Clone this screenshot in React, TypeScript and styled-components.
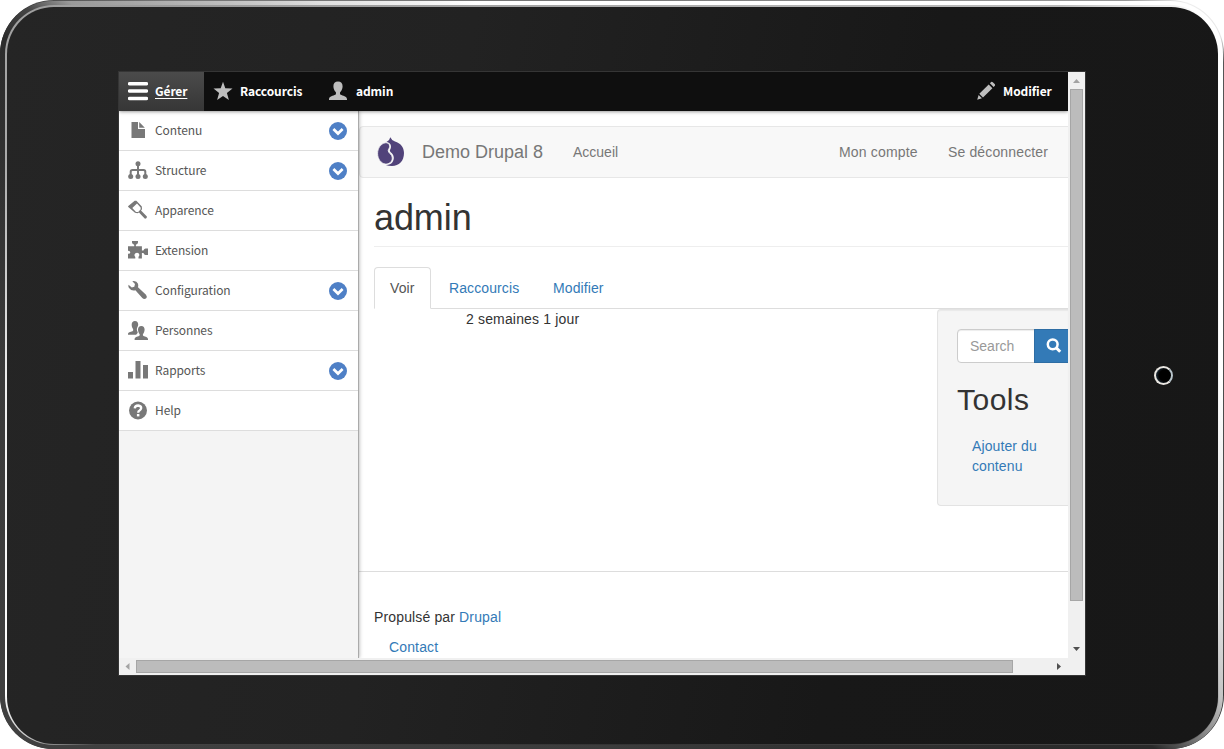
import React from "react";
import styled, { createGlobalStyle, css } from "styled-components";

const Global = createGlobalStyle`
  * { box-sizing: border-box; }
  body { margin: 0; background: #fff; overflow: hidden; }
  a { text-decoration: none; }
`;

/* Tablet */
const Rim = styled.div`
  width: 1224px;
  height: 749px;
  padding: 1px 1px 0 0;
  border-radius: 54px;
  background: conic-gradient(
    from 0deg at 612px 374px,
    #777 0deg, #999 54deg, #eee 57deg, #e4e4e4 61deg, #555 63deg, #444 115deg,
    #222 122deg, #222 238deg, #2a2a2a 242deg, #2e2e2e 290deg, #222 301deg, #555 304deg, #777 310deg
  );
`;
const Metal = styled.div`
  width: 1223px;
  height: 748px;
  padding: 4px 4px 4px 5px;
  border-radius: 53px;
  background: conic-gradient(
    from 0deg at 612px 374px,
    #fff 0deg, #fff 90deg, #dcdcdc 112deg, #c4c4c4 118deg, #777 122deg, #2a2a2a 124.5deg,
    #3c3c3c 180deg, #404040 238deg, #3a3a3a 270deg, #2c2c2c 299deg, #444 302deg, #999 304.5deg, #e0e0e0 322deg, #fff 340deg
  );
`;
const Edge = styled.div`
  width: 1214px;
  height: 740px;
  padding: 2px 1px 1px 2px;
  border-radius: 49px;
  background: conic-gradient(
    from 0deg at 612px 374px,
    #aaa 0deg, #bbb 50deg, #fff 58deg, #eee 110deg, #aaa 119deg, #444 123deg,
    #333 180deg, #444 235deg, #ccc 239deg, #fff 243deg, #eee 270deg, #aaa 290deg, #999 310deg, #aaa 360deg
  );
`;
const Face = styled.div`
  display: flex;
  align-items: center;
  height: 737px;
  width: 1211px;
  border-radius: 47px;
  padding: 0 45px 0 111px;
  justify-content: space-between;
  background: linear-gradient(100deg, #252525 0%, #222 35%, #181818 70%, #171717 100%);
`;
const HomeButton = styled.div`
  width: 19px;
  height: 19px;
  border-radius: 50%;
  border: 2px solid #e9e6e1;
  border-right-color: #b9c6cc;
  background: radial-gradient(circle at 60% 50%, #000 50%, #2b4354 90%);
`;
const Screen = styled.div`
  display: grid;
  grid-template-columns: 949px 17px;
  grid-template-rows: 586px 17px;
  border: 1px solid #353535;
  margin-top: -5px;
  background: #f0f0f0;
`;
const Page = styled.div`
  display: flex;
  flex-direction: column;
  overflow: hidden;
  background: #fff;
  font: 14px/20px "Liberation Sans", Arial, sans-serif;
  color: #333;
`;

/* Scrollbars */
const VTrack = styled.div`
  display: flex;
  flex-direction: column;
  align-items: center;
`;
const HTrack = styled.div`
  display: flex;
  align-items: center;
`;
const Arrow = styled.svg`
  display: block;
  width: 17px;
  height: 17px;
`;
const VThumb = styled.div`
  width: 13px;
  height: 512px;
  background: #bcbcbc;
  border: 1px solid #a6a6a6;
`;
const HThumb = styled.div`
  width: 877px;
  height: 13px;
  background: #bcbcbc;
  border: 1px solid #a6a6a6;
`;
const Spacer = styled.div`
  flex: 1;
`;

/* Admin toolbar */
const Toolbar = styled.div`
  display: flex;
  flex: none;
  height: 39px;
  background: #0f0f0f;
  box-shadow: 0 0 4px rgba(0, 0, 0, 0.6);
  position: relative;
  z-index: 2;
`;
const Tab = styled.a<{ $active?: boolean; $width: number; $gap?: number }>`
  display: flex;
  align-items: center;
  width: ${(p) => p.$width}px;
  padding-left: 9px;
  gap: ${(p) => p.$gap ?? 7}px;
  color: #fff;
  font: 700 12px/20px "Noto Sans CJK SC", sans-serif;
  letter-spacing: -0.1px;
  ${(p) =>
    p.$active &&
    css`
      background: linear-gradient(#4b4b4b, #363636);
      span { text-decoration: underline; text-underline-offset: 2px; }
    `}
  svg { flex: none; }
`;
const Body = styled.div`
  display: flex;
  flex: 1;
  min-height: 0;
`;
const Tray = styled.nav`
  flex: none;
  width: 240px;
  background: #f4f4f4;
  border-right: 1px solid #aaa;
  box-shadow: 0 0 4px rgba(0, 0, 0, 0.35);
  position: relative;
  z-index: 1;
`;
const MenuRow = styled.a`
  display: flex;
  align-items: center;
  height: 40px;
  padding: 0 11px 0 9px;
  gap: 7px;
  background: #fff;
  border-bottom: 1px solid #ddd;
  color: #565656;
  font: 400 12px/20px "Noto Sans CJK SC", sans-serif;
  letter-spacing: -0.1px;
  svg { flex: none; }
  span { flex: 1; }
`;
const ChevronIcon = styled.svg`
  margin-top: 2px;
`;

/* Site content */
const Content = styled.main`
  flex: 1;
  min-width: 0;
  overflow: hidden;
  padding-top: 15px;
`;
const NavBar = styled.div`
  display: flex;
  align-items: center;
  height: 52px;
  width: 740px;
  padding-left: 17px;
  border: 1px solid #e7e7e7;
  border-radius: 4px;
  background: #f8f8f8;
  color: #777;
`;
const Brand = styled.span`
  width: 151px;
  margin-left: 17px;
  font-size: 18px;
  line-height: 20px;
`;
const NavLink = styled.a<{ $width: number; $spacing?: number }>`
  width: ${(p) => p.$width}px;
  letter-spacing: ${(p) => p.$spacing ?? 0}px;
  white-space: nowrap;
`;
const Inner = styled.div`
  padding-left: 15px;
`;
const Title = styled.h1`
  margin: 20px 0 20px;
  height: 49px;
  border-bottom: 1px solid #eee;
  font-size: 36px;
  font-weight: 400;
  line-height: 40px;
  letter-spacing: -0.1px;
`;
const Tabs = styled.div`
  display: flex;
  height: 42px;
  border-bottom: 1px solid #ddd;
`;
const PageTab = styled.a<{ $active?: boolean; $width: number }>`
  width: ${(p) => p.$width}px;
  height: 42px;
  padding: 10px 15px;
  border: 1px solid transparent;
  border-radius: 4px 4px 0 0;
  color: #337ab7;
  margin-right: 2px;
  letter-spacing: 0.1px;
  ${(p) =>
    p.$active &&
    css`
      color: #555;
      background: #fff;
      border-color: #ddd;
      border-bottom-color: #fff;
    `}
`;
const Columns = styled.div`
  display: flex;
  justify-content: space-between;
  height: 262px;
`;
const Since = styled.div`
  padding-left: 92px;
  letter-spacing: 0.16px;
`;
const Well = styled.aside`
  flex: none;
  width: 131px;
  height: 197px;
  padding: 19px 0 0 19px;
  background: #f5f5f5;
  border: 1px solid #e3e3e3;
  border-right: 0;
  border-radius: 4px 0 0 4px;
  box-shadow: inset 0 1px 1px rgba(0, 0, 0, 0.05);
`;
const Search = styled.div`
  display: flex;
  height: 34px;
`;
const Field = styled.div`
  width: 78px;
  padding: 6px 12px;
  border: 1px solid #ccc;
  border-radius: 4px 0 0 4px;
  background: #fff;
  color: #999;
  box-shadow: inset 0 1px 1px rgba(0, 0, 0, 0.075);
`;
const SearchButton = styled.div`
  flex: 1;
  margin-left: -1px;
  padding: 8px 0 0 11px;
  background: #337ab7;
  border: 1px solid #2e6da4;
  border-right: 0;
`;
const WellTitle = styled.h2`
  margin: 20px 0 10px;
  font-size: 30px;
  font-weight: 400;
  line-height: 33px;
  letter-spacing: 0.5px;
`;
const WellLink = styled.a`
  display: block;
  width: 90px;
  padding: 10px 0 0 15px;
  color: #337ab7;
  letter-spacing: 0.1px;
`;
const Footer = styled.footer`
  border-top: 1px solid #ddd;
  padding: 35px 0 0 15px;
  letter-spacing: 0.14px;
  a { color: #337ab7; }
  div + div { padding: 10px 0 0 15px; }
`;

const Icon = ({ children, color = "#787878" }: { children: React.ReactNode; color?: string }) => (
  <svg width="20" height="20" viewBox="0 0 20 20" fill={color}>
    {children}
  </svg>
);

const personPath =
  "M10 .5c3 0 4.600 2 4.600 4.800c0 2.400-1 4.500-2.300 5.700c-.5.600-.4 2.300.3 2.700c2 .9 6.400 1.600 6.400 4.300v1H1v-1c0-2.700 4.400-3.400 6.400-4.300c.7-.4.800-2.100.3-2.700C6.400 9.800 5.400 7.700 5.400 5.300C5.400 2.500 7 .5 10 .5z";

const menu: { label: string; more?: boolean; icon: React.ReactNode }[] = [
  { label: "Contenu", more: true, icon: <path d="M3.500 2H10v7h7v9H3.500zM11.200 2L16.800 7.700h-5.600z" /> },
  {
    label: "Structure",
    more: true,
    icon: (
      <>
        <circle cx="10" cy="3.800" r="2.500" />
        <path d="M10 5v10M2.700 16v-4.200q0-1.800 1.800-1.800h11q1.800 0 1.800 1.800V16" fill="none" stroke="#787878" strokeWidth="2" />
        <circle cx="2.700" cy="16.500" r="2.500" />
        <circle cx="10" cy="16.500" r="2.500" />
        <circle cx="17.300" cy="16.500" r="2.500" />
      </>
    ),
  },
  {
    label: "Apparence",
    icon: (
      <path
        fillRule="evenodd"
        d="M6.700.8L8.400.700L13.800 6.500L14 9.200L13 10.500L18.900 16.500Q19.300 18.900 16.700 18.600L11 12.600L9.500 13.300L7 12.800L0 6.800L.3 6zM4.300 8L8 12L10.200 11.900L12.700 9.300L12.600 7.500L9 3.600z"
      />
    ),
  },
  {
    label: "Extension",
    icon: (
      <path d="M0 6.300h6.200V4.700Q4 4 4 2.600V1h6v1.600Q10 4 7.900 4.700v1.600h6v4.200h1.500Q16.200 8.600 17.600 8.600H20v6.300h-2.400Q16.200 14.900 15.400 13h-1.500v5.500h-3.400v-1.700Q12 15.300 10.800 13.500Q9.300 12 7.400 13.200Q5.500 15 7.300 17v1.500H0v-4.700Q2.300 14 2.300 12.200Q2.200 10.600 0 10.700z" />
    ),
  },
  {
    label: "Configuration",
    more: true,
    icon: (
      <path d="M4.300 1.300Q8.500.4 10 3.800Q10.500 5.600 10 7.300L18 14.800Q19.700 17 18 18.600Q16 19.800 14.300 18L7.400 10.300Q3 11.200.8 7.800Q.1 6 .5 4.700L3.800 7.500L6.300 6.700L7 4.100z" />
    ),
  },
  {
    label: "Personnes",
    icon: (
      <>
        <path d="M6.900 1c2.300 0 3.300 1.700 3.300 3.500c0 1-.2 1.500-.6 2.200c-1 1.300-1 3.600 0 5.300c.5.900-.5 1.600-1.500 2.800H0v-.8c0-2 2.300-1.900 4.500-2.800c.8-.4 1-1.500.4-2.400C4 7.600 3.600 6 3.700 4.300C3.800 2.300 4.900 1 6.900 1z" />
        <path d="M13.300 6c2.200 0 3.300 1.600 3.300 3.600c0 1.800-.7 3.400-1.500 4.400c-.4.700-.3 1.600.4 1.900c1.800.7 4.500 1 4.500 3.400v.7H6.600v-.7c0-2.400 2.700-2.700 4.500-3.400c.7-.3.800-1.200.4-1.900c-.8-1-1.500-2.600-1.500-4.400C10 7.600 11.100 6 13.300 6z" />
      </>
    ),
  },
  { label: "Rapports", more: true, icon: <path d="M0 12h5v6.500H0zM7.500 1h5v17.500h-5zM15 5h5v13.500h-5z" /> },
  {
    label: "Help",
    icon: (
      <>
        <circle cx="10" cy="10.500" r="9" />
        <path d="M6.700 8.300Q7 5.500 10.200 5.500Q13.300 5.800 13.200 8.200Q13 9.700 11.500 10.500Q10.200 11.100 10.200 12.800" fill="none" stroke="#fff" strokeWidth="2.300" />
        <path d="M8.900 14h2.500v2.400H8.900z" fill="#fff" />
      </>
    ),
  },
];

const Chevron = () => (
  <ChevronIcon width="18" height="18" viewBox="0 0 18 18">
    <circle cx="9" cy="9" r="9" fill="#4f80c6" />
    <path d="M4.400 7L9 11.500L13.600 7" fill="none" stroke="#fff" strokeWidth="2.700" />
  </ChevronIcon>
);

const Logo = () => (
  <svg width="28" height="30" viewBox="0 0 28 30" fill="#51437a">
    <path d="M13.300.3Q14.500 3.300 18 4.500C23.500 6 27 10.500 27 16C27 24 22 29 15 29Q11 29 8.800 27.900Q13.500 28 15.200 25.500C17.800 22 17.300 18 13.700 15.200Q12 13.800 13.300 12.300C14.600 10 14.200 6.500 11.200 5.500L9.500 5Q12.800 3.300 13.300.3z" />
    <path
      d="M8.300 5.800C10.500 5.400 12.800 6.800 12.600 9.500C12.500 11.500 11.200 12 11.200 13.800C11.200 16 15.300 17.300 15.300 21C15.200 25 12 27.300 8.500 27C4 26.500 .6 22 .6 16.500C.6 11.500 3.500 6.700 8.300 5.800z"
      stroke="#f8f8f8"
      strokeWidth=".8"
    />
  </svg>
);

export default function App() {
  return (
    <>
      <Global />
      <Rim>
        <Metal>
          <Edge>
            <Face>
              <Screen>
                <Page>
                  <Toolbar>
                    <Tab $active $width={85}>
                      <Icon color="#fff">
                        <path d="M1.500 1h17a1.500 1.500 0 010 3.500h-17a1.500 1.500 0 010-3.500zM1.500 8.300h17a1.500 1.500 0 010 3.500h-17a1.500 1.500 0 010-3.500zM1.500 15.700h17a1.500 1.500 0 010 3.500h-17a1.500 1.500 0 010-3.500z" />
                      </Icon>
                      <span>Gérer</span>
                    </Tab>
                    <Tab $width={115}>
                      <Icon color="#bebebe">
                        <path d="M10 .8L12.300 7.200L19.500 7.400L13.900 11.900L15.900 19L10 15L4.100 19L6.100 11.900L.5 7.400L7.700 7.200z" />
                      </Icon>
                      <span>Raccourcis</span>
                    </Tab>
                    <Tab $width={80} $gap={8}>
                      <Icon color="#bebebe">
                        <path d={personPath} />
                      </Icon>
                      <span>admin</span>
                    </Tab>
                    <Spacer />
                    <Tab $width={101}>
                      <Icon color="#bebebe">
                        <path d="M13.900 2.300L15.200 1Q16 .6 16.800 1.200L18.900 3.300Q19.300 4 18.900 4.800L17.600 6.100zM12.700 3.500L16.400 7.300L7 16.500L3.300 12.800zM2.600 13.900L6 17.300L1.200 18.800z" />
                      </Icon>
                      <span>Modifier</span>
                    </Tab>
                  </Toolbar>
                  <Body>
                    <Tray>
                      {menu.map((m) => (
                        <MenuRow key={m.label}>
                          <Icon>{m.icon}</Icon>
                          <span>{m.label}</span>
                          {m.more && <Chevron />}
                        </MenuRow>
                      ))}
                    </Tray>
                    <Content>
                      <NavBar>
                        <Logo />
                        <Brand>Demo Drupal 8</Brand>
                        <NavLink $width={266}>Accueil</NavLink>
                        <NavLink $width={109} $spacing={0.17}>Mon compte</NavLink>
                        <NavLink $width={120} $spacing={0.14}>Se déconnecter</NavLink>
                      </NavBar>
                      <Inner>
                        <Title>admin</Title>
                        <Tabs>
                          <PageTab $active $width={57}>Voir</PageTab>
                          <PageTab $width={102}>Raccourcis</PageTab>
                          <PageTab $width={84}>Modifier</PageTab>
                        </Tabs>
                        <Columns>
                          <Since>2 semaines 1 jour</Since>
                          <Well>
                            <Search>
                              <Field>Search</Field>
                              <SearchButton>
                                <svg width="16" height="16" viewBox="0 0 16 16" fill="none" stroke="#fff">
                                  <circle cx="6.700" cy="6.300" r="4.900" strokeWidth="2.500" />
                                  <path d="M10.300 9.900L14.200 13.700" strokeWidth="3" />
                                </svg>
                              </SearchButton>
                            </Search>
                            <WellTitle>Tools</WellTitle>
                            <WellLink>Ajouter du contenu</WellLink>
                          </Well>
                        </Columns>
                      </Inner>
                      <Footer>
                        <div>
                          Propulsé par <a>Drupal</a>
                        </div>
                        <div>
                          <a>Contact</a>
                        </div>
                      </Footer>
                    </Content>
                  </Body>
                </Page>
                <VTrack>
                  <Arrow viewBox="0 0 17 17"><path d="M5 11L8.500 7L12 11z" fill="#a3a3a3" /></Arrow>
                  <VThumb />
                  <Spacer />
                  <Arrow viewBox="0 0 17 17"><path d="M5 6L12 6L8.500 10z" fill="#505050" /></Arrow>
                </VTrack>
                <HTrack>
                  <Arrow viewBox="0 0 17 17"><path d="M10.500 5V12L6.500 8.500z" fill="#a3a3a3" /></Arrow>
                  <HThumb />
                  <Spacer />
                  <Arrow viewBox="0 0 17 17"><path d="M6 5V12L10 8.500z" fill="#505050" /></Arrow>
                </HTrack>
              </Screen>
              <HomeButton />
            </Face>
          </Edge>
        </Metal>
      </Rim>
    </>
  );
}
